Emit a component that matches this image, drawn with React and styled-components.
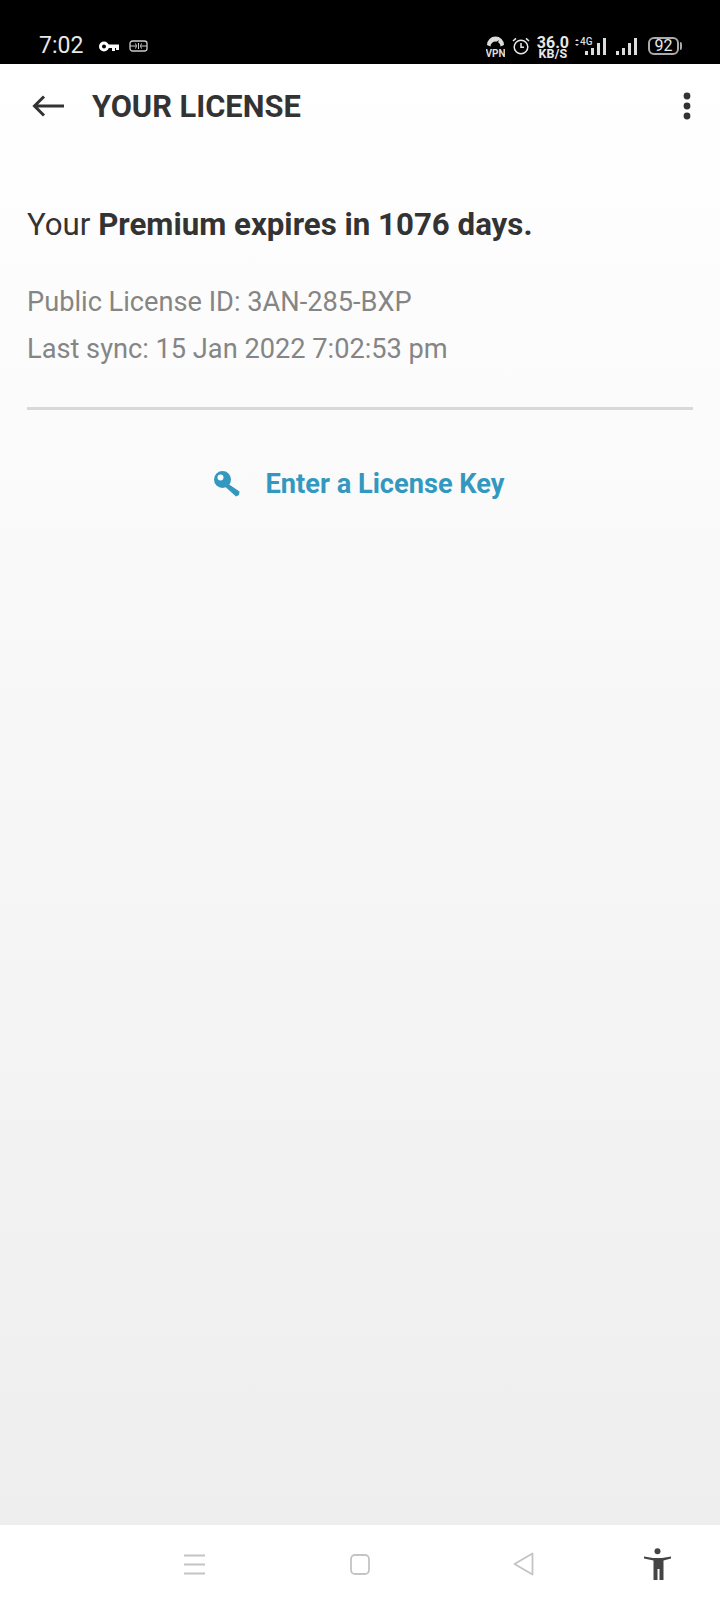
import styled, { createGlobalStyle } from "styled-components";

const Global = createGlobalStyle`
  html, body { margin: 0; padding: 0; background: #fff; }
  body { font-family: Roboto, "Liberation Sans", sans-serif; }
`;

const Screen = styled.div`
  width: 720px;
  height: 1600px;
  display: flex;
  flex-direction: column;
  overflow: hidden;
`;

const StatusBar = styled.div`
  height: 64px;
  flex: none;
  box-sizing: border-box;
  background: #000;
  color: #e8e8e8;
  padding: 30px 41px 0 39px;
  display: flex;
  justify-content: space-between;
  align-items: flex-start;
`;

const StatusGroup = styled.div`
  display: flex;
  align-items: center;
  height: 32px;
`;

const Clock = styled.span`
  font-size: 23px;
  line-height: 32px;
  margin-right: 16px;
`;

const Speed = styled.div`
  display: flex;
  flex-direction: column;
  align-items: center;
  font-weight: 700;
  font-size: 16px;
  line-height: 11px;
  margin: 3px 5px 0 7px;
  & > span:last-child {
    font-size: 12.5px;
    letter-spacing: 0.2px;
  }
`;

const Battery = styled.div`
  position: relative;
  width: 27px;
  height: 14px;
  margin-left: 9px;
  border: 2.5px solid #aaa;
  border-radius: 6px;
  font-size: 16px;
  line-height: 14px;
  text-align: center;
  &::after {
    content: "";
    position: absolute;
    right: -5px;
    top: 3px;
    width: 2px;
    height: 8px;
    background: #aaa;
    border-radius: 0 2px 2px 0;
  }
`;

const Page = styled.main`
  flex: 1;
  background: linear-gradient(#fff 0%, #eeeeee 100%);
`;

const AppBar = styled.header`
  height: 84px;
  display: flex;
  align-items: center;
  padding: 0 29px 0 32px;
`;

const Title = styled.h1`
  flex: 1;
  margin: 0 0 0 28px;
  font-size: 30.8px;
  font-weight: 700;
  color: #333;
`;

const Content = styled.section`
  padding: 57px 27px 0;
`;

const Headline = styled.p`
  margin: 0 0 34px;
  font-size: 31.25px;
  line-height: 40px;
  color: #333;
  & strong {
    font-weight: 700;
  }
`;

const Meta = styled.p`
  margin: 0;
  font-size: 27.2px;
  line-height: 47px;
  color: #858585;
`;

const Divider = styled.hr`
  margin: 34px 0 0;
  border: 0;
  height: 3px;
  background: #d9d9d9;
`;

const KeyButton = styled.div`
  margin-top: 54px;
  display: flex;
  justify-content: center;
  align-items: center;
  gap: 26px;
  font-size: 27.2px;
  line-height: 40px;
  font-weight: 700;
  color: #3398bf;
  padding-right: 2px;
`;

const NavBar = styled.nav`
  height: 75px;
  flex: none;
  box-sizing: border-box;
  background: #fff;
  display: flex;
  align-items: center;
  padding: 3px 0 0 184px;
`;

const NavSlot = styled.div`
  display: flex;
  width: ${(p) => p.$w}px;
`;

const KeyIcon = () => (
  <svg width="26" height="26" viewBox="0 0 26 26">
    <path
      fillRule="evenodd"
      fill="#3398bf"
      d="M8.5 0a8.5 8.5 0 1 1 0 17 8.5 8.5 0 0 1 0-17ZM6.5 3.5a3 3 0 1 0 0 6 3 3 0 0 0 0-6Z"
    />
    <path d="M13 12 L25.5 20.5 L25 24 L22 25.5 L11.5 16 Z" fill="#3398bf" />
  </svg>
);

const StatusKey = () => (
  <svg width="20" height="11" viewBox="0 0 20 11" style={{ marginRight: 10 }}>
    <path
      fillRule="evenodd"
      fill="#fff"
      d="M5 .5a5 5 0 1 1 0 10 5 5 0 0 1 0-10ZM5 3.5a2 2 0 1 0 0 4 2 2 0 0 0 0-4Z"
    />
    <rect x="8" y="3.5" width="12" height="3.5" fill="#fff" />
    <rect x="13" y="6" width="3" height="4" fill="#fff" />
    <rect x="17" y="6" width="3" height="3" fill="#fff" />
  </svg>
);

const CardIcon = () => (
  <svg width="19" height="12" viewBox="0 0 19 12" fill="none" stroke="#ccc" strokeWidth="1.3">
    <rect x="1" y="1" width="17" height="10" rx="2.5" />
    <path d="M1 6h6M12 6h6M9.5 3v6M6.5 3.5l1 2.5-1 2.5M12.5 3.5l-1 2.5 1 2.5" strokeWidth="1" />
  </svg>
);

const VpnIcon = () => (
  <svg width="19" height="24" viewBox="0 0 19 24">
    <path d="M1 11a8.5 8.5 0 0 1 17 0l-3.5 1.5a5 5 0 0 0-10 0Z" fill="#ddd" />
    <path d="M9 9l4-3-2 5Z" fill="#000" />
    <text x="9.5" y="22.5" textAnchor="middle" fontSize="10" fontWeight="700" fill="#ddd" fontFamily="Roboto">VPN</text>
  </svg>
);

const AlarmIcon = () => (
  <svg width="18" height="18" viewBox="0 0 18 18" fill="none" stroke="#e8e8e8" strokeWidth="1.5" style={{ marginLeft: 7 }}>
    <circle cx="9" cy="10" r="6.8" />
    <path d="M9 6v4.3h3M1 4l3-2.6M17 4l-3-2.6" />
  </svg>
);

const Signal = ({ lte }) => (
  <svg width={lte ? 32 : 24} height="20" viewBox={lte ? "0 0 32 20" : "0 0 24 20"} fill="#ddd">
    {lte && (
      <>
        <path d="M1 5l2-2 2 2ZM1 8l2 2 2-2Z" />
        <text x="6" y="9" fontSize="10" fontFamily="Roboto" fontWeight="500">4G</text>
      </>
    )}
    <g transform={lte ? "translate(10 0)" : ""}>
      <rect x="1" y="15" width="3" height="4" />
      <rect x="7" y="12" width="3" height="7" />
      <rect x="13" y="7" width="3" height="12" />
      <rect x="19" y="2" width="3" height="17" />
    </g>
  </svg>
);

const SignalGap = styled.div`
  width: 9px;
`;

const BackIcon = () => (
  <svg width="32" height="22" viewBox="0 0 32 22" fill="none" stroke="#333" strokeWidth="3">
    <path d="M32 11H3M12 1.5L2.5 11 12 20.5" />
  </svg>
);

const MoreIcon = () => (
  <svg width="8" height="28" viewBox="0 0 8 28" fill="#333">
    <circle cx="4" cy="4" r="3.4" />
    <circle cx="4" cy="14" r="3.4" />
    <circle cx="4" cy="24" r="3.4" />
  </svg>
);

const MenuIcon = () => (
  <svg width="21" height="21" viewBox="0 0 21 21" fill="#c4c4c4">
    <rect y="0.5" width="21" height="2" />
    <rect y="9.5" width="21" height="2" />
    <rect y="18.5" width="21" height="2" />
  </svg>
);

const HomeIcon = () => (
  <svg width="20" height="21" viewBox="0 0 20 21" fill="none" stroke="#c4c4c4" strokeWidth="1.8">
    <rect x="1" y="1" width="18" height="19" rx="4" />
  </svg>
);

const TriangleIcon = () => (
  <svg width="21" height="24" viewBox="0 0 21 24" fill="none" stroke="#c4c4c4" strokeWidth="1.8" strokeLinejoin="round">
    <path d="M19.5 1.5V22.5L1.5 12Z" />
  </svg>
);

const PersonIcon = () => (
  <svg width="27" height="32" viewBox="0 0 27 32" fill="#444">
    <circle cx="13.5" cy="3.3" r="3" />
    <path d="M0 8.5l9 1.5h9l9-1.5v2l-7.5 2V32h-4V21h-2v11h-4V12.5L0 10.5Z" />
  </svg>
);

export default function App() {
  return (
    <Screen>
      <Global />
      <StatusBar>
        <StatusGroup>
          <Clock>7:02</Clock>
          <StatusKey />
          <CardIcon />
        </StatusGroup>
        <StatusGroup>
          <VpnIcon />
          <AlarmIcon />
          <Speed>
            <span>36.0</span>
            <span>KB/S</span>
          </Speed>
          <Signal lte />
          <SignalGap />
          <Signal />
          <Battery>92</Battery>
        </StatusGroup>
      </StatusBar>
      <Page>
        <AppBar>
          <BackIcon />
          <Title>YOUR LICENSE</Title>
          <MoreIcon />
        </AppBar>
        <Content>
          <Headline>
            Your <strong>Premium expires in 1076 days.</strong>
          </Headline>
          <Meta>Public License ID: 3AN-285-BXP</Meta>
          <Meta>Last sync: 15 Jan 2022 7:02:53 pm</Meta>
          <Divider />
          <KeyButton>
            <KeyIcon />
            Enter a License Key
          </KeyButton>
        </Content>
      </Page>
      <NavBar>
        <NavSlot $w={166}><MenuIcon /></NavSlot>
        <NavSlot $w={163}><HomeIcon /></NavSlot>
        <NavSlot $w={131}><TriangleIcon /></NavSlot>
        <NavSlot $w={30}><PersonIcon /></NavSlot>
      </NavBar>
    </Screen>
  );
}
